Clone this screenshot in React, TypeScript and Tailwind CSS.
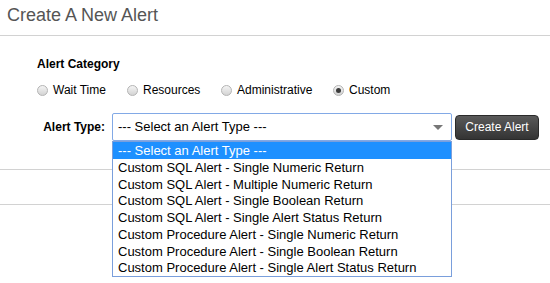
import { useState } from 'react';

const categories = ['Wait Time', 'Resources', 'Administrative', 'Custom'];

const alertTypes = [
  '--- Select an Alert Type ---',
  'Custom SQL Alert - Single Numeric Return',
  'Custom SQL Alert - Multiple Numeric Return',
  'Custom SQL Alert - Single Boolean Return',
  'Custom SQL Alert - Single Alert Status Return',
  'Custom Procedure Alert - Single Numeric Return',
  'Custom Procedure Alert - Single Boolean Return',
  'Custom Procedure Alert - Single Alert Status Return',
];

function Radio({ label, checked, onClick }: { label: string; checked: boolean; onClick: () => void }) {
  return (
    <label className="flex items-center cursor-pointer" onClick={onClick}>
      <span className="flex h-[11px] w-[11px] items-center justify-center rounded-full border border-[#b4b4b4] bg-gradient-to-b from-[#f4f4f4] to-[#d4d4d4]">
        {checked && <span className="h-[5px] w-[5px] rounded-full bg-[#3c3c3c]" />}
      </span>
      <span className="ml-[5px] text-[12px] text-black">{label}</span>
    </label>
  );
}

export default function App() {
  const [category, setCategory] = useState('Custom');
  const [open] = useState(true);

  return (
    <div className="relative h-[283px] w-[550px] overflow-hidden bg-white font-['Liberation_Sans',Arial,sans-serif]">
      {/* Header */}
      <div className="h-[36px] border-b border-[#d2d2d2] pl-[7px] pt-[5px] text-[18px] leading-[20px] text-[#555]">
        Create A New Alert
      </div>

      {/* Form panel */}
      <div className="h-[134px] border-b border-[#d2d2d2] pt-[21px]">
        <div className="pl-[37px] text-[12px] font-bold leading-[14px] text-black">Alert Category</div>
        <div className="mt-[12px] flex h-[14px] items-center pl-[37px]">
          <div className="w-[90px]">
            <Radio label="Wait Time" checked={category === 'Wait Time'} onClick={() => setCategory('Wait Time')} />
          </div>
          <div className="w-[94px]">
            <Radio label="Resources" checked={category === 'Resources'} onClick={() => setCategory('Resources')} />
          </div>
          <div className="w-[112px]">
            <Radio label="Administrative" checked={category === 'Administrative'} onClick={() => setCategory('Administrative')} />
          </div>
          <Radio label="Custom" checked={category === 'Custom'} onClick={() => setCategory('Custom')} />
        </div>

        <div className="mt-[16px] flex items-center">
          <div className="w-[105px] text-right text-[12px] font-bold text-black">Alert Type:</div>
          <div className="relative ml-[7px]">
            <div className="flex h-[28px] w-[340px] items-center rounded-[2px] border border-[#82a9e6] bg-white pl-[5px] text-[13px] text-black">
              --- Select an Alert Type ---
              <span className="absolute right-[9px] top-[12px] h-0 w-0 border-x-[5px] border-t-[5px] border-x-transparent border-t-[#777]" />
            </div>
            {open && (
              <div className="absolute left-0 top-[28px] z-10 w-[340px] border border-[#7a9fdc] bg-white">
                {alertTypes.map((t, i) => (
                  <div
                    key={t}
                    className={
                      i === 0
                        ? 'h-[16.75px] bg-[#1e90ff] pl-[5px] text-[13px] leading-[17px] text-white'
                        : 'h-[16.75px] pl-[5px] text-[13px] leading-[17px] text-black'
                    }
                  >
                    {t}
                  </div>
                ))}
              </div>
            )}
          </div>
          <button className="ml-[3px] h-[25px] w-[84px] rounded-[4px] border border-[#2a2a2a] bg-gradient-to-b from-[#5a5a5a] to-[#343434] text-[12px] text-white">
            Create Alert
          </button>
        </div>
      </div>

      {/* Footer panel */}
      <div className="h-[35px] border-b border-[#d2d2d2]" />
    </div>
  );
}
